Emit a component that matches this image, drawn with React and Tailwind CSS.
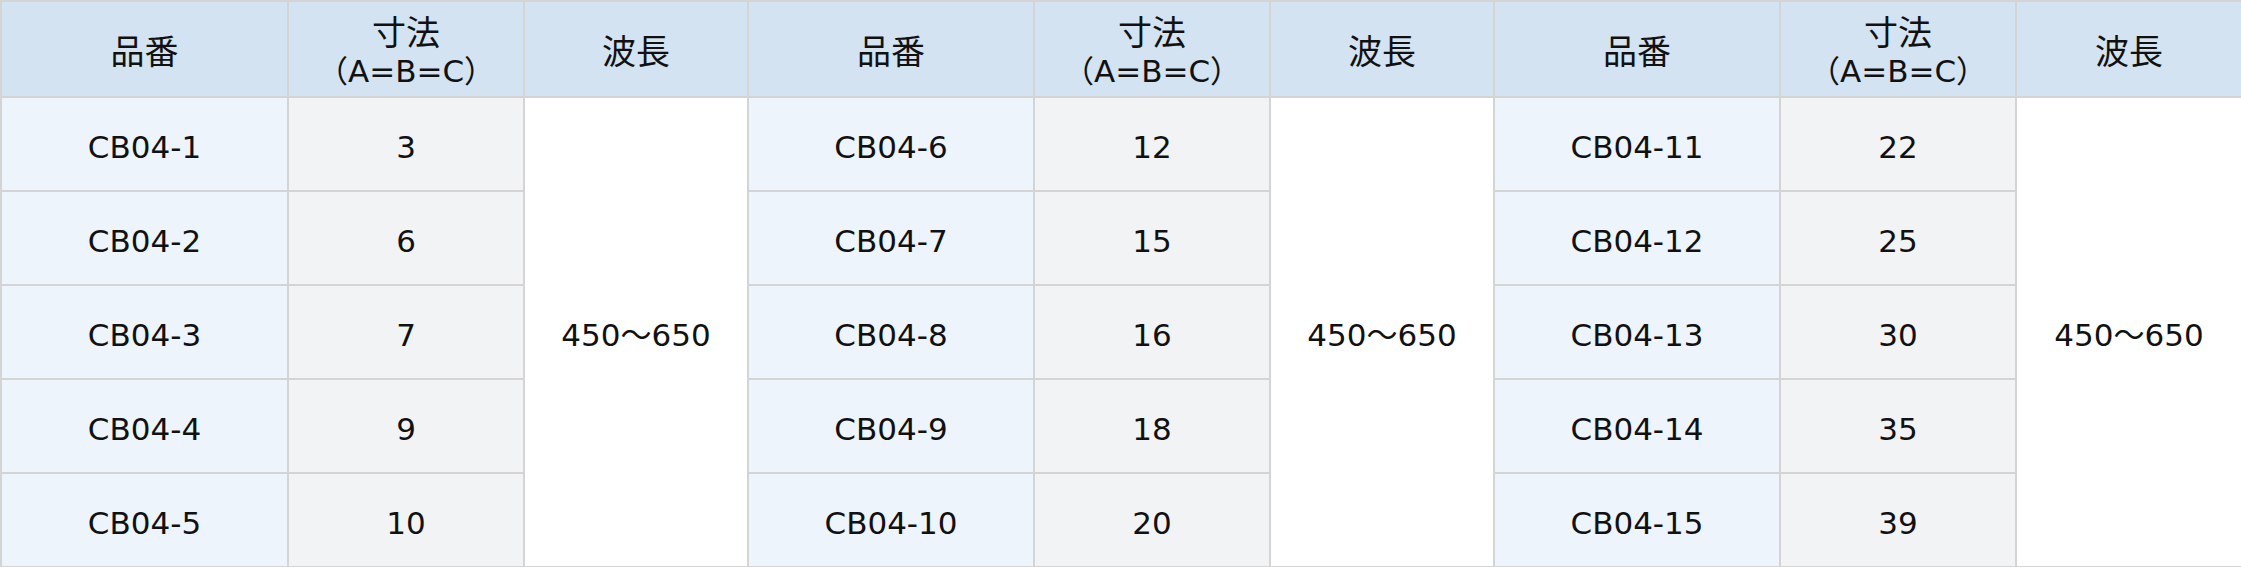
import React from 'react';

// Product table: three blocks of 品番 / 寸法 / 波長, five rows each.
const BLOCKS = [
  { rows: [['CB04-1', '3'], ['CB04-2', '6'], ['CB04-3', '7'], ['CB04-4', '9'], ['CB04-5', '10']], wave: '450～650' },
  { rows: [['CB04-6', '12'], ['CB04-7', '15'], ['CB04-8', '16'], ['CB04-9', '18'], ['CB04-10', '20']], wave: '450～650' },
  { rows: [['CB04-11', '22'], ['CB04-12', '25'], ['CB04-13', '30'], ['CB04-14', '35'], ['CB04-15', '39']], wave: '450～650' },
];

const cell = 'border-2 border-[#d4d4d4] text-center align-middle px-0 pb-0 pt-[6px]';

export default function App() {
  return (
    <div className="w-[2241px] h-[567px] bg-white text-[#111] font-['DejaVu_Sans','Noto_Sans_CJK_JP',sans-serif] text-[31px] leading-[38px]">
      <table className="w-[2241px] table-fixed border-collapse">
        <colgroup>
          <col className="w-[287px]" />
          <col className="w-[236px]" />
          <col className="w-[224px]" />
          <col className="w-[286px]" />
          <col className="w-[236px]" />
          <col className="w-[224px]" />
          <col className="w-[286px]" />
          <col className="w-[236px]" />
          <col className="w-[226px]" />
        </colgroup>
        <thead>
          <tr className="h-[96px] bg-[#d3e3f1]">
            {BLOCKS.map((b, i) => (
              <React.Fragment key={i}>
                <th className={`${cell} font-normal text-[34px]`}>品番</th>
                <th className={`${cell} font-normal`}>
                  <div className="text-[34px] leading-[38px]">寸法</div>
                  <div className="leading-[38px]">（A=B=C）</div>
                </th>
                <th className={`${cell} font-normal text-[34px]`}>波長</th>
              </React.Fragment>
            ))}
          </tr>
        </thead>
        <tbody>
          {[0, 1, 2, 3, 4].map((r) => (
            <tr key={r} className="h-[94px]">
              {BLOCKS.map((b, i) => (
                <React.Fragment key={i}>
                  <td className={`${cell} bg-[#edf4fb]`}>{b.rows[r][0]}</td>
                  <td className={`${cell} bg-[#f2f3f5]`}>{b.rows[r][1]}</td>
                  {r === 0 && (
                    <td rowSpan={5} className={`${cell} bg-white`}>{b.wave}</td>
                  )}
                </React.Fragment>
              ))}
            </tr>
          ))}
        </tbody>
      </table>
    </div>
  );
}
